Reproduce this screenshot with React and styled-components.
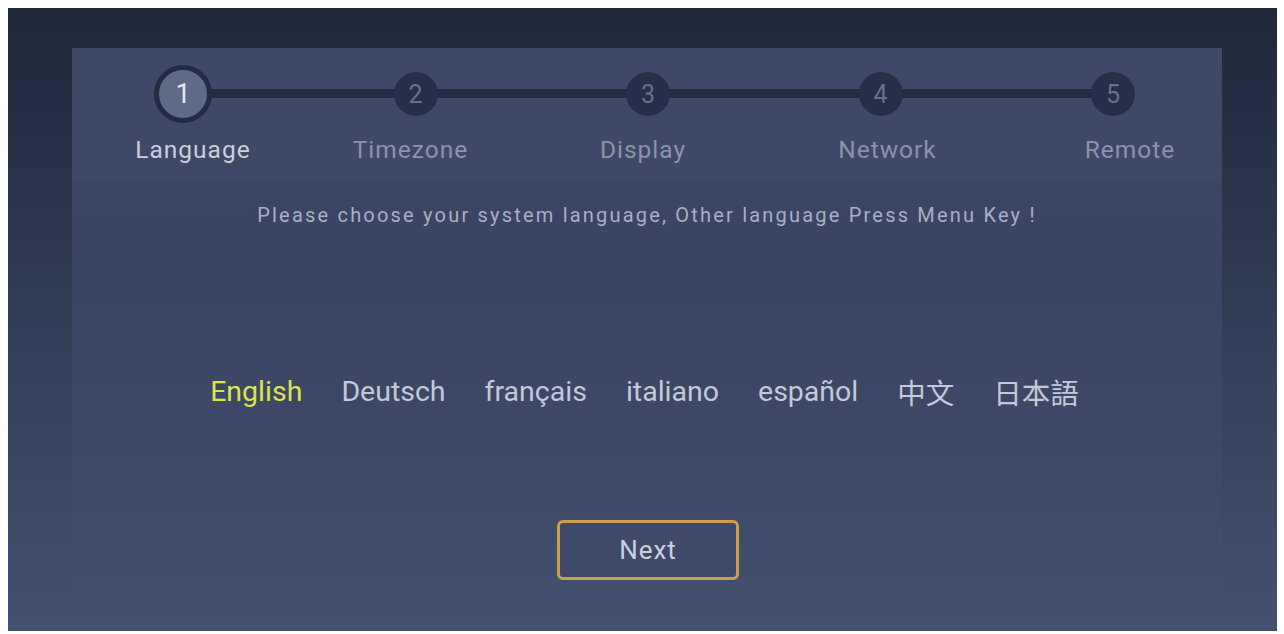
import React from "react";
import styled, { createGlobalStyle } from "styled-components";

const Global = createGlobalStyle`
  html, body { margin: 0; padding: 0; background: #ffffff; }
  body { padding: 8px 7px 3px 8px; font-family: Roboto, "Noto Sans", "Noto Sans CJK SC", sans-serif; }
`;

const Frame = styled.div`
  width: 1269px;
  height: 623px;
  box-sizing: border-box;
  padding: 40px 55px 0 64px;
  display: flex;
  flex-direction: column;
  background: linear-gradient(180deg, #20283b 0%, #283249 25%, #334059 55%, #3f4c69 85%, #44516f 100%);
`;

const Panel = styled.div`
  flex: 1;
  display: flex;
  flex-direction: column;
  background: linear-gradient(180deg, #3b4764 0%, #394562 40%, #3e4a68 75%, #45526f 100%);
`;

const Header = styled.div`
  height: 134px;
  box-sizing: border-box;
  background: #3d4966;
  padding: 17px 0 0 51px;
`;

const Stepper = styled.div`
  position: relative;
  width: 1050px;
  display: flex;
  justify-content: space-between;
`;

const Track = styled.div`
  position: absolute;
  left: 60px;
  right: 60px;
  top: 24px;
  height: 9px;
  background: #222b42;
  border-radius: 4px;
`;

const Step = styled.div`
  position: relative;
  z-index: 1;
  width: 120px;
  display: flex;
  flex-direction: column;
  align-items: center;
`;

const CircleSlot = styled.div`
  height: 58px;
  display: flex;
  align-items: center;
  justify-content: center;
`;

const Circle = styled.div`
  box-sizing: border-box;
  width: ${p => (p.$active ? 58 : 44)}px;
  height: ${p => (p.$active ? 58 : 44)}px;
  border-radius: 50%;
  border: ${p => (p.$active ? "5px solid #232c43" : "none")};
  background: ${p => (p.$active ? "#5d6a88" : "#252f47")};
  color: ${p => (p.$active ? "#e4e8f0" : "#66718c")};
  font-size: ${p => (p.$active ? 27 : 25)}px;
  display: flex;
  align-items: center;
  justify-content: center;
`;

const StepLabel = styled.div`
  margin-top: 12px;
  margin-left: ${p => p.$shift * 2}px;
  white-space: nowrap;
  font-size: 24.5px;
  letter-spacing: 1px;
  color: ${p => (p.$active ? "#c9cfdc" : "#8b94aa")};
`;

const Body = styled.div`
  flex: 1;
  display: flex;
  flex-direction: column;
  align-items: center;
`;

const Hint = styled.div`
  margin-top: 21px;
  font-size: 20px;
  letter-spacing: 2.2px;
  color: #a9b0c2;
  white-space: nowrap;
  margin-left: 0px;
`;

const Languages = styled.div`
  margin-top: 144px;
  display: flex;
  align-items: center;
  gap: 39px;
  margin-left: -5px;
`;

const Lang = styled.div`
  font-size: 28.5px;
  color: ${p => (p.$active ? "#dde34c" : "#c3c9d8")};
  font-family: Roboto, "Noto Sans CJK SC", "Noto Sans CJK JP", sans-serif;
`;

const NextButton = styled.button`
  margin-top: 108px;
  width: 182px;
  height: 60px;
  box-sizing: border-box;
  border: 3px solid #c9a24c;
  border-radius: 6px;
  background: #3e4a68;
  color: #c9d0e0;
  font-family: Roboto, sans-serif;
  font-size: 26px;
  letter-spacing: 1px;
  margin-left: 2px;
  cursor: pointer;
`;

const steps = [
  { n: 1, label: "Language", shift: 10 },
  { n: 2, label: "Timezone", shift: -5 },
  { n: 3, label: "Display", shift: -5 },
  { n: 4, label: "Network", shift: 7 },
  { n: 5, label: "Remote", shift: 17 },
];

const langs = ["English", "Deutsch", "français", "italiano", "español", "中文", "日本語"];

export default function App() {
  return (
    <>
      <Global />
      <Frame>
        <Panel>
          <Header>
            <Stepper>
              <Track />
              {steps.map(s => (
                <Step key={s.n}>
                  <CircleSlot>
                    <Circle $active={s.n === 1}>{s.n}</Circle>
                  </CircleSlot>
                  <StepLabel $active={s.n === 1} $shift={s.shift}>{s.label}</StepLabel>
                </Step>
              ))}
            </Stepper>
          </Header>
          <Body>
            <Hint>Please choose your system language, Other language Press Menu Key !</Hint>
            <Languages>
              {langs.map((l, i) => (
                <Lang key={l} $active={i === 0}>{l}</Lang>
              ))}
            </Languages>
            <NextButton>Next</NextButton>
          </Body>
        </Panel>
      </Frame>
    </>
  );
}
